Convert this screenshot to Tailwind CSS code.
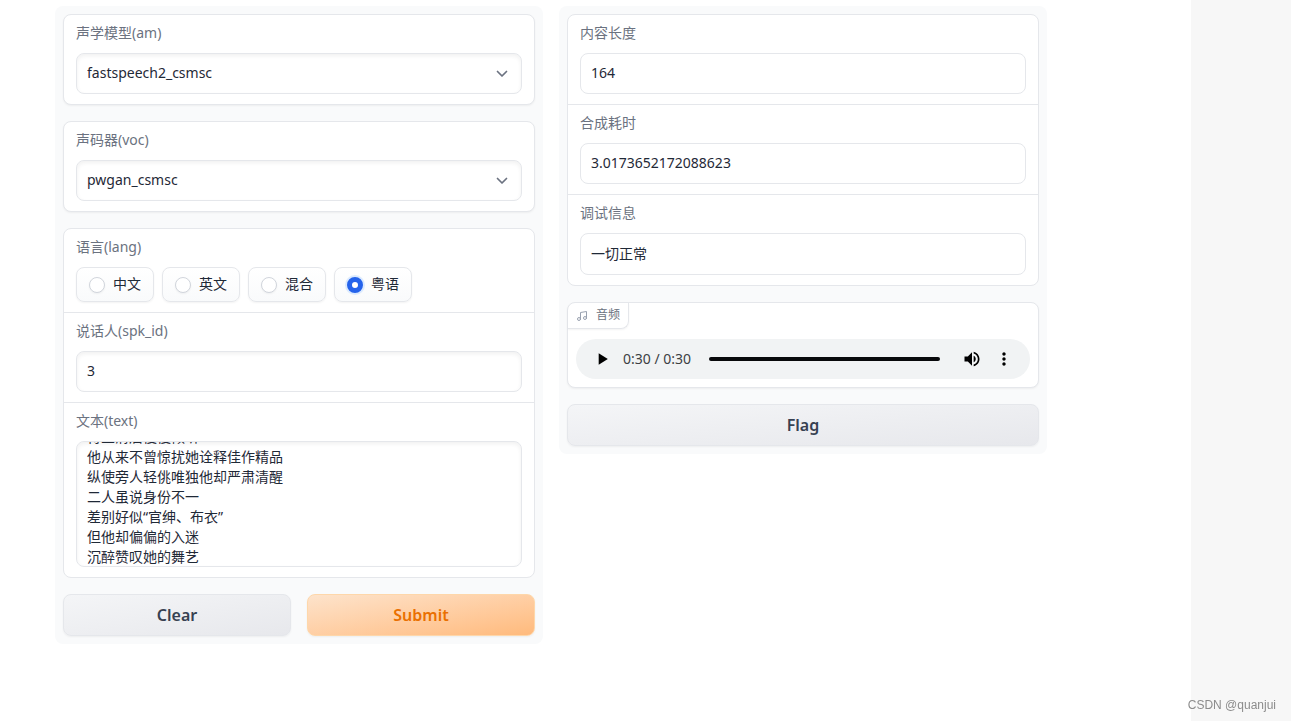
<!DOCTYPE html>
<html lang="zh-CN">
<head>
<meta charset="utf-8">
<meta name="viewport" content="width=device-width, initial-scale=1">
<title>语音合成</title>
<script src="https://cdn.jsdelivr.net/npm/@tailwindcss/browser@4"></script>
</head>
<body class="flex min-h-screen bg-white font-['Noto_Sans','Noto_Sans_CJK_SC',sans-serif] text-sm text-[#1f2937]">
  <main class="flex flex-1 items-start gap-4 pt-[6px] pr-36 pl-[55px]">
    <form class="flex min-w-0 flex-1 flex-col gap-4 rounded-lg bg-[#f9fafb] p-2">
      <div class="flex flex-col gap-[10px] rounded-lg border border-gray-200 bg-white px-3 pt-2 pb-[10px] shadow-xs">
        <label for="am" class="leading-5 text-[#6b7280]">声学模型(am)</label>
        <div class="grid">
          <select id="am" class="col-start-1 row-start-1 h-[41px] w-full appearance-none rounded-lg border border-gray-200 bg-white px-[10px] pb-[2px] shadow-[inset_0_2px_4px_0_rgba(0,0,0,0.06)]"><option>fastspeech2_csmsc</option></select>
          <svg class="pointer-events-none col-start-1 row-start-1 mr-[14px] size-3 self-center justify-self-end text-[#6b7280]" viewBox="0 0 12 12" fill="none" stroke="currentColor" stroke-width="1.7" stroke-linecap="round" stroke-linejoin="round"><path d="M1.500 3.500 6 8 10.500 3.500"/></svg>
        </div>
      </div>
      <div class="flex flex-col gap-[10px] rounded-lg border border-gray-200 bg-white px-3 pt-2 pb-[10px] shadow-xs">
        <label for="voc" class="leading-5 text-[#6b7280]">声码器(voc)</label>
        <div class="grid">
          <select id="voc" class="col-start-1 row-start-1 h-[41px] w-full appearance-none rounded-lg border border-gray-200 bg-white px-[10px] pb-[2px] shadow-[inset_0_2px_4px_0_rgba(0,0,0,0.06)]"><option>pwgan_csmsc</option></select>
          <svg class="pointer-events-none col-start-1 row-start-1 mr-[14px] size-3 self-center justify-self-end text-[#6b7280]" viewBox="0 0 12 12" fill="none" stroke="currentColor" stroke-width="1.7" stroke-linecap="round" stroke-linejoin="round"><path d="M1.500 3.500 6 8 10.500 3.500"/></svg>
        </div>
      </div>
      <div class="divide-y divide-gray-200 rounded-lg border border-gray-200 bg-white">
        <fieldset class="px-3 pt-2 pb-[10px]">
          <legend class="contents"><span class="mb-[10px] block leading-5 text-[#6b7280]">语言(lang)</span></legend>
          <div class="flex flex-wrap gap-2">
            <label class="flex h-[35px] items-center gap-2 rounded-lg border border-gray-200 bg-linear-to-b from-white to-gray-50 px-3 shadow-xs"><input type="radio" name="lang" class="size-4 appearance-none rounded-full border border-gray-300 bg-white shadow-xs checked:border-[5px] checked:border-[#2563eb] checked:ring-2 checked:ring-blue-100"><span class="pb-[2px]">中文</span></label>
            <label class="flex h-[35px] items-center gap-2 rounded-lg border border-gray-200 bg-linear-to-b from-white to-gray-50 px-3 shadow-xs"><input type="radio" name="lang" class="size-4 appearance-none rounded-full border border-gray-300 bg-white shadow-xs checked:border-[5px] checked:border-[#2563eb] checked:ring-2 checked:ring-blue-100"><span class="pb-[2px]">英文</span></label>
            <label class="flex h-[35px] items-center gap-2 rounded-lg border border-gray-200 bg-linear-to-b from-white to-gray-50 px-3 shadow-xs"><input type="radio" name="lang" class="size-4 appearance-none rounded-full border border-gray-300 bg-white shadow-xs checked:border-[5px] checked:border-[#2563eb] checked:ring-2 checked:ring-blue-100"><span class="pb-[2px]">混合</span></label>
            <label class="flex h-[35px] items-center gap-2 rounded-lg border border-gray-200 bg-linear-to-b from-white to-gray-50 px-3 shadow-xs"><input type="radio" name="lang" checked class="size-4 appearance-none rounded-full border border-gray-300 bg-white shadow-xs checked:border-[5px] checked:border-[#2563eb] checked:ring-2 checked:ring-blue-100"><span class="pb-[2px]">粤语</span></label>
          </div>
        </fieldset>
        <div class="flex flex-col gap-[10px] px-3 pt-2 pb-[10px]">
          <label for="spk" class="leading-5 text-[#6b7280]">说话人(spk_id)</label>
          <input id="spk" type="text" value="3" class="h-[41px] w-full rounded-lg border border-gray-200 bg-white px-[10px] pb-[2px] shadow-[inset_0_2px_4px_0_rgba(0,0,0,0.06)]">
        </div>
        <div class="flex flex-col gap-[10px] px-3 pt-2 pb-[10px]">
          <label for="text" class="leading-5 text-[#6b7280]">文本(text)</label>
          <textarea id="text" class="h-[126px] w-full resize-none overflow-hidden rounded-lg border border-gray-200 bg-white p-[10px] leading-5 shadow-[inset_0_2px_4px_0_rgba(0,0,0,0.06)]">待业清后慢慢倾听
他从来不曾惊扰她诠释佳作精品
纵使旁人轻佻唯独他却严肃清醒
二人虽说身份不一
差别好似“官绅、布衣”
但他却偏偏的入迷
沉醉赞叹她的舞艺
</textarea>
        </div>
      </div>
      <div class="flex gap-4">
        <button type="reset" class="h-[42px] flex-1 rounded-lg border border-gray-200 bg-linear-to-br from-[#f4f5f7] to-[#e7e8ec] text-base font-semibold text-[#374151] shadow-xs">Clear</button>
        <button type="button" class="h-[42px] flex-1 rounded-lg border border-[#fed7aa] bg-linear-to-br from-[#fde3cb] to-[#ffba7c] text-base font-semibold text-[#ea7000] shadow-xs">Submit</button>
      </div>
    </form>

    <section class="flex min-w-0 flex-1 flex-col gap-4 rounded-lg bg-[#f9fafb] p-2">
      <div class="divide-y divide-gray-200 rounded-lg border border-gray-200 bg-white">
        <div class="flex flex-col gap-[10px] px-3 pt-2 pb-[10px]">
          <label for="len" class="leading-5 text-[#6b7280]">内容长度</label>
          <input id="len" type="text" readonly value="164" class="h-[41px] w-full rounded-lg border border-gray-200 bg-white px-[10px] pb-[2px]">
        </div>
        <div class="flex flex-col gap-[10px] px-3 pt-2 pb-[10px]">
          <label for="cost" class="leading-5 text-[#6b7280]">合成耗时</label>
          <input id="cost" type="text" readonly value="3.0173652172088623" class="h-[41px] w-full rounded-lg border border-gray-200 bg-white px-[10px] pb-[2px]">
        </div>
        <div class="flex flex-col gap-[10px] px-3 pt-2 pb-[10px]">
          <label for="debug" class="leading-5 text-[#6b7280]">调试信息</label>
          <input id="debug" type="text" readonly value="一切正常" class="h-[42px] w-full rounded-lg border border-gray-200 bg-white px-[10px] pb-[3px]">
        </div>
      </div>
      <div class="flex flex-col items-start gap-[10px] rounded-lg border border-gray-200 bg-white shadow-xs">
        <div class="flex h-[26px] items-center gap-2 rounded-tl-lg rounded-br-lg border-r border-b border-gray-200 px-2 text-xs text-[#6b7280] shadow-xs">
          <svg class="size-3 text-gray-400" viewBox="0 0 24 24" fill="none" stroke="currentColor" stroke-width="2" stroke-linecap="round" stroke-linejoin="round"><path d="M9 18V5l12-2v13"/><circle cx="6" cy="18" r="3"/><circle cx="18" cy="16" r="3"/></svg>
          <span class="pb-[2px]">音频</span>
        </div>
        <div class="w-full px-2 pb-2">
          <div class="flex h-10 items-center rounded-full bg-[#f1f3f4] pr-4 pl-4">
            <button type="button" aria-label="播放" class="mr-[11px]"><svg class="size-5" viewBox="0 0 24 24" fill="#000"><path d="M8 5v14l11-7z"/></svg></button>
            <span class="mr-[18px] text-[#3c4043]">0:30 / 0:30</span>
            <input type="range" aria-label="进度" min="0" max="30" value="30" class="mr-[22px] h-1 min-w-0 flex-1 appearance-none rounded-full bg-[#08090b] [&::-webkit-slider-thumb]:size-0 [&::-webkit-slider-thumb]:appearance-none">
            <button type="button" aria-label="音量" class="mr-3"><svg class="size-5" viewBox="0 0 24 24" fill="#000"><path d="M3 9v6h4l5 5V4L7 9H3zm13.500 3c0-1.770-1.020-3.290-2.500-4.030v8.050c1.480-.73 2.500-2.250 2.500-4.020zM14 3.230v2.060c2.890.86 5 3.540 5 6.710s-2.110 5.850-5 6.710v2.060c4.010-.91 7-4.490 7-8.770s-2.990-7.860-7-8.770z"/></svg></button>
            <button type="button" aria-label="更多"><svg class="size-5" viewBox="0 0 24 24" fill="#000"><path d="M12 8c1.100 0 2-.9 2-2s-.9-2-2-2-2 .9-2 2 .9 2 2 2zm0 2c-1.100 0-2 .9-2 2s.9 2 2 2 2-.9 2-2-.9-2-2-2zm0 6c-1.100 0-2 .9-2 2s.9 2 2 2 2-.9 2-2-.9-2-2-2z"/></svg></button>
          </div>
        </div>
      </div>
      <button type="button" class="h-[42px] rounded-lg border border-gray-200 bg-linear-to-br from-[#f4f5f7] to-[#e7e8ec] text-base font-semibold text-[#374151] shadow-xs">Flag</button>
    </section>
  </main>
  <aside class="w-[100px] shrink-0 bg-[#f7f7f7]"></aside>
  <p class="fixed right-[15px] bottom-2 font-['Liberation_Sans',sans-serif] text-xs text-[#8c8c8c]">CSDN @quanjui</p>
  <script>
    document.getElementById('text').scrollTop = 25;
  </script>
</body>
</html>
